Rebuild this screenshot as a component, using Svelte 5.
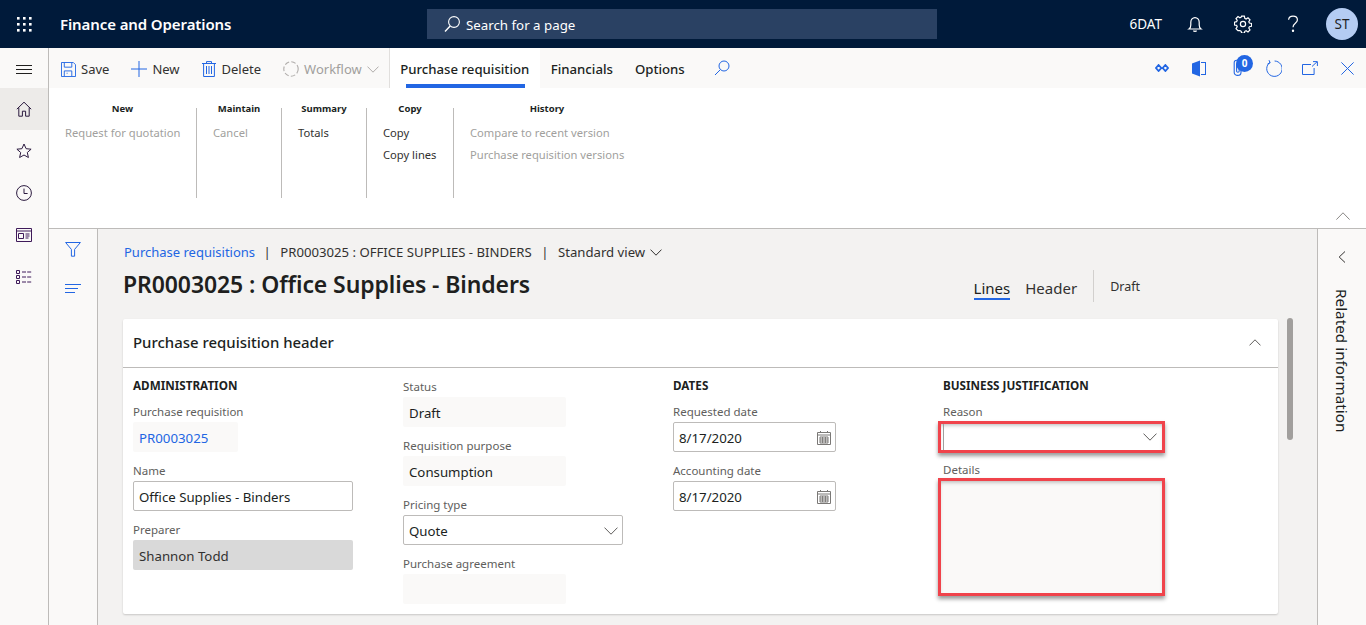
<script>
	const groups = [
		{ title: "New", width: 148, items: [{ label: "Request for quotation", off: true }] },
		{ title: "Maintain", width: 85, items: [{ label: "Cancel", off: true }] },
		{ title: "Summary", width: 85, items: [{ label: "Totals" }] },
		{ title: "Copy", width: 87, items: [{ label: "Copy" }, { label: "Copy lines" }] },
		{
			title: "History",
			width: 186,
			items: [
				{ label: "Compare to recent version", off: true },
				{ label: "Purchase requisition versions", off: true },
			],
		},
	];
</script>

<div class="shell">
	<header class="topbar">
		<svg class="waffle" width="16" height="16" viewBox="0 0 16 16" fill="#fff">
			{#each [1, 7, 13] as y}
				{#each [1, 7, 13] as x}
					<rect x={x} y={y} width="2.6" height="2.6" />
				{/each}
			{/each}
		</svg>
		<span class="brand">Finance and Operations</span>
		<div class="search">
			<svg width="18" height="18" viewBox="0 0 18 18" fill="none" stroke="#fff" stroke-width="1.1">
				<circle cx="11" cy="7" r="5.4" />
				<path d="M7.2 11 2 16.4" stroke-width="1.4" />
			</svg>
			<span>Search for a page</span>
		</div>
		<div class="top-right">
			<span class="company">6DAT</span>
			<svg class="bell" width="16" height="18" viewBox="0 0 16 18" fill="none" stroke="#fff" stroke-width="1.2">
				<path d="M2 14h12c-1.4-1-1.8-2.2-1.8-4V7.2C12.2 4.6 10.4 2.6 8 2.6S3.8 4.6 3.8 7.2V10c0 1.8-.4 3-1.8 4Z" />
				<path d="M6.4 15.6c.5.9 2.7.9 3.2 0" />
			</svg>
			<svg class="gear" width="18" height="18" viewBox="0 0 18 18" fill="none" stroke="#fff" stroke-width="1.2">
				<circle cx="9" cy="9" r="2.6" />
				<path d="M7.6 1.2h2.8l.4 2.2 1.3.6 1.9-1.2 2 2-1.2 1.9.6 1.3 2.1.5v2.8l-2.1.4-.6 1.3 1.2 1.9-2 2-1.9-1.2-1.3.6-.4 1.9H7.6l-.4-1.9-1.3-.6L4 15.6l-2-2 1.2-1.9-.6-1.3-2.1-.4V7.2l2.1-.5.6-1.3L2 3.5l2-2 1.9 1.2 1.3-.6Z" />
			</svg>
			<svg class="help" width="12" height="18" viewBox="0 0 12 18" fill="none" stroke="#fff" stroke-width="1.2">
				<path d="M1.6 4.8C1.8 2.6 3.6 1.2 6 1.2s4.4 1.5 4.4 3.7c0 3.3-4.4 3.4-4.4 7.3" />
				<circle cx="6" cy="15.8" r=".6" fill="#fff" />
			</svg>
			<span class="avatar">ST</span>
		</div>
	</header>

	<div class="workspace">
		<nav class="nav">
			<div class="nav-item burger">
				<svg width="16" height="9" viewBox="0 0 16 9" stroke="#201f1e" stroke-width="1"><path d="M0 .5h16M0 4.5h16M0 8.5h16" /></svg>
			</div>
			<div class="nav-item active">
				<svg width="16" height="16" viewBox="0 0 16 16" fill="none" stroke="#2b1a3f" stroke-width="1"><path d="M.8 8.2 8 1.2l7.2 7M2.8 6.6v8.6h3.6v-5h3.2v5h3.6V6.6" /></svg>
			</div>
			<div class="nav-item">
				<svg width="16" height="16" viewBox="0 0 16 16" fill="none" stroke="#2b1a3f" stroke-width="1"><path d="m8 1 2.1 4.7 5 .5-3.8 3.3 1.1 5L8 12l-4.4 2.5 1.1-5L.9 6.2l5-.5Z" /></svg>
			</div>
			<div class="nav-item">
				<svg width="16" height="16" viewBox="0 0 16 16" fill="none" stroke="#2b1a3f" stroke-width="1"><circle cx="8" cy="8" r="7.4" /><path d="M8 3.6V8.5h3.6" /></svg>
			</div>
			<div class="nav-item">
				<svg width="16" height="14" viewBox="0 0 16 14" fill="none" stroke="#3f1a5a" stroke-width="1"><path d="M.5 .5h15v13H.5zM.5 3h15M2.5 5.5h5v5h-5zM9.5 6h4M9.5 8h4M9.5 10h3" /></svg>
			</div>
			<div class="nav-item">
				<svg width="16" height="14" viewBox="0 0 16 14" fill="none" stroke="#3f1a5a" stroke-width="1"><path d="M.5 .5h3v3h-3zM.5 5.5h3v3h-3zM.5 10.5h3v3h-3z" /><path d="M6 2h9.5M6 7h9.5M6 12h9.5" stroke-dasharray="4 1.2" /></svg>
			</div>
		</nav>

		<div class="page">
			<div class="actions">
				<button class="act">
					<svg width="15" height="15" viewBox="0 0 16 16" fill="none" stroke="#2266e3" stroke-width="1"><path d="M.5 .5h12.6l2.4 2.4v12.6H.5z" /><path d="M3.5 .8v4.7h8V.8M3.5 15v-5.5h8V15M6 12h1" /></svg>
					Save
				</button>
				<button class="act plus">
					<svg width="16" height="16" viewBox="0 0 16 16" stroke="#2266e3" stroke-width="1"><path d="M8 0v16M0 8h16" /></svg>
					New
				</button>
				<button class="act del">
					<svg width="14" height="16" viewBox="0 0 14 16" fill="none" stroke="#2266e3" stroke-width="1"><path d="M0 2.5h14M4.5 2.5V.6h5v1.9M1.6 2.5v13h10.8v-13M4.5 5v8M7 5v8M9.5 5v8" /></svg>
					Delete
				</button>
				<button class="act flow">
					<svg width="16" height="16" viewBox="0 0 16 16" fill="none" stroke="#b0adab" stroke-width="1.1" stroke-dasharray="4.6 2.2"><circle cx="8" cy="8" r="7.2" /></svg>
					Workflow
					<svg class="chev" width="12" height="7" viewBox="0 0 12 7" fill="none" stroke="#b0adab" stroke-width="1"><path d="m.5 .6 5.5 5.6L11.5 .6" /></svg>
				</button>
				<div class="tabs">
					<div class="tab selected">Purchase requisition</div>
					<div class="tab">Financials</div>
					<div class="tab">Options</div>
				</div>
				<svg class="find" width="16" height="16" viewBox="0 0 16 16" fill="none" stroke="#2266e3" stroke-width="1"><circle cx="10" cy="6" r="5" /><path d="M6.4 9.6 1 15" /></svg>
				<div class="tools">
					<svg class="t-links" width="14" height="8" viewBox="0 0 14 8" fill="none" stroke="#2266e3" stroke-width="1.8"><path d="m3.6 1 2.7 3-2.7 3L1 4Zm6.8 0L13 4l-2.6 3-2.7-3Z" /></svg>
					<svg class="t-office" width="14" height="17" viewBox="0 0 14 17" fill="#2266e3"><path d="M0 3.4 8 .4v16.2l-8-3Z" /><path d="M9 2h5v13H9v-1h4V3H9Z" /></svg>
					<span class="clip">
						<svg width="10" height="18" viewBox="0 0 10 18" fill="none" stroke="#2266e3" stroke-width="1.1"><path d="M8 4v9.4c0 4-6.8 4-6.8 0V3.6c0-3.2 5-3.2 5 0V12c0 1.6-2.6 1.6-2.6 0V5" /></svg>
						<b class="badge">0</b>
					</span>
					<svg class="t-refresh" width="17" height="17" viewBox="0 0 17 17" fill="none" stroke="#2266e3" stroke-width="1"><path d="M5 2.4A7.7 7.7 0 1 0 9.6 1M4 .2l1.2 2.6-2.6 1.1" /></svg>
					<svg class="t-pop" width="16" height="14" viewBox="0 0 16 14" fill="none" stroke="#2266e3" stroke-width="1"><path d="M9 3.5H.5v10h11.6V7M10 5.5 15 .8M11 .6h4.4V5" /></svg>
					<svg class="t-close" width="13" height="13" viewBox="0 0 13 13" stroke="#2266e3" stroke-width="1"><path d="m.4 .4 12.2 12.2M12.6 .4.4 12.6" /></svg>
				</div>
			</div>

			<div class="ribbon">
				{#each groups as g}
					<section class="group" style="width: {g.width}px">
						<h4>{g.title}</h4>
						{#each g.items as item}
							<div class="cmd" class:off={item.off}>{item.label}</div>
						{/each}
					</section>
				{/each}
				<svg class="ribbon-up" width="14" height="8" viewBox="0 0 14 8" fill="none" stroke="#8a8886" stroke-width="1"><path d="M.4 7.6 7 .8l6.6 6.8" /></svg>
			</div>

			<div class="content">
				<aside class="rail">
					<svg width="16" height="15" viewBox="0 0 16 15" fill="none" stroke="#2266e3" stroke-width="1"><path d="M.6 .5h14.8L9.6 7.4v6.8H6.4V7.4Z" /></svg>
					<svg width="16" height="9" viewBox="0 0 16 9" stroke="#2266e3" stroke-width="1"><path d="M0 .5h16M0 4.5h13M0 8.5h10" /></svg>
				</aside>

				<main class="form">
					<div class="crumbs">
						<span class="link first">Purchase requisitions</span>
						<i>|</i>
						<span>PR0003025 : OFFICE SUPPLIES - BINDERS</span>
						<i>|</i>
						<span>Standard view</span>
						<svg width="12" height="7" viewBox="0 0 12 7" fill="none" stroke="#323130" stroke-width="1"><path d="m.5 .6 5.5 5.6L11.5 .6" /></svg>
					</div>
					<div class="heading">
						<h1>PR0003025 : Office Supplies - Binders</h1>
						<div class="views">
							<span class="view current">Lines</span>
							<span class="view">Header</span>
							<span class="state">Draft</span>
						</div>
					</div>

					<div class="card-row">
						<div class="card">
							<div class="card-head">
								<h2>Purchase requisition header</h2>
								<svg width="12" height="7" viewBox="0 0 12 7" fill="none" stroke="#605e5c" stroke-width="1"><path d="M.5 6.4 6 .8l5.5 5.6" /></svg>
							</div>
							<div class="columns">
								<div class="col">
									<h3>ADMINISTRATION</h3>
									<label>Purchase requisition</label>
									<div class="box ro w105 link">PR0003025</div>
									<label>Name</label>
									<div class="box input w220">Office Supplies - Binders</div>
									<label>Preparer</label>
									<div class="box locked w220">Shannon Todd</div>
								</div>
								<div class="col">
									<label>Status</label>
									<div class="box ro w163">Draft</div>
									<label>Requisition purpose</label>
									<div class="box ro w163">Consumption</div>
									<label>Pricing type</label>
									<div class="box input w220 select">
										Quote
										<svg width="14" height="8" viewBox="0 0 14 8" fill="none" stroke="#605e5c" stroke-width="1"><path d="m.5 .6 6.5 6.6L13.5 .6" /></svg>
									</div>
									<label>Purchase agreement</label>
									<div class="box ro w163"></div>
								</div>
								<div class="col">
									<h3>DATES</h3>
									<label>Requested date</label>
									<div class="box input w163 select">
										8/17/2020
										<svg width="14" height="14" viewBox="0 0 14 14" fill="none" stroke="#7a7876" stroke-width="1"><path d="M.5 1.5h13v12H.5zM.5 4h13M3 6h8v6H3zM5.6 6v6M8.4 6v6M3 8h8M3 10h8M3.5 0v2M10.5 0v2" /></svg>
									</div>
									<label>Accounting date</label>
									<div class="box input w163 select">
										8/17/2020
										<svg width="14" height="14" viewBox="0 0 14 14" fill="none" stroke="#7a7876" stroke-width="1"><path d="M.5 1.5h13v12H.5zM.5 4h13M3 6h8v6H3zM5.6 6v6M8.4 6v6M3 8h8M3 10h8M3.5 0v2M10.5 0v2" /></svg>
									</div>
								</div>
								<div class="col">
									<h3>BUSINESS JUSTIFICATION</h3>
									<label>Reason</label>
									<div class="box marked reason select">
										<svg width="14" height="8" viewBox="0 0 14 8" fill="none" stroke="#605e5c" stroke-width="1"><path d="m.5 .6 6.5 6.6L13.5 .6" /></svg>
									</div>
									<label class="details-label">Details</label>
									<div class="box marked details"></div>
								</div>
							</div>
						</div>
						<div class="thumb"></div>
					</div>
				</main>

				<aside class="related">
					<svg width="8" height="12" viewBox="0 0 8 12" fill="none" stroke="#323130" stroke-width="1"><path d="M7 .5 1.2 6 7 11.5" /></svg>
					<span>Related information</span>
				</aside>
			</div>
		</div>
	</div>
</div>

<style>
	:global(body) {
		margin: 0;
		overflow: hidden;
	}

	.shell {
		width: 1366px;
		height: 625px;
		overflow: hidden;
		display: flex;
		flex-direction: column;
		font-family: "Noto Sans", "Open Sans", sans-serif;
		font-size: 12.5px;
		color: #201f1e;
		background: #fff;
	}

	svg {
		display: block;
		flex: none;
	}

	.topbar {
		height: 48px;
		flex: none;
		display: flex;
		align-items: center;
		background: #001a3a;
		color: #fff;
	}

	.waffle {
		margin-left: 16px;
	}

	.brand {
		margin-left: 28px;
		width: 367px;
		font-size: 15px;
		font-weight: 600;
		letter-spacing: -0.1px;
	}

	.search {
		width: 510px;
		height: 30px;
		display: flex;
		align-items: center;
		gap: 5px;
		padding-left: 16px;
		box-sizing: border-box;
		background: #2a4163;
		font-size: 13.3px;
	}

	.search span {
		padding-top: 2px;
	}

	.top-right {
		margin-left: auto;
		display: flex;
		align-items: center;
		padding-right: 8px;
	}

	.company {
		font-size: 13.5px;
		margin-right: 25px;
	}

	.bell {
		margin-right: 31px;
	}

	.gear {
		margin-right: 35px;
	}

	.help {
		margin-right: 27px;
	}

	.avatar {
		width: 32px;
		height: 32px;
		border-radius: 50%;
		background: #b4ccf2;
		color: #201f1e;
		display: flex;
		align-items: center;
		justify-content: center;
		font-size: 13.5px;
	}

	.workspace {
		flex: 1;
		display: flex;
		min-height: 0;
	}

	.nav {
		width: 48px;
		flex: none;
		background: #faf9f8;
		border-right: 1px solid #bdbbb9;
		display: flex;
		flex-direction: column;
	}

	.nav-item {
		height: 42px;
		display: flex;
		align-items: center;
		justify-content: center;
	}

	.nav-item.burger {
		height: 40px;
		padding-top: 2px;
		box-sizing: border-box;
	}

	.nav-item.active {
		background: #edebe9;
	}

	.page {
		flex: 1;
		min-width: 0;
		display: flex;
		flex-direction: column;
	}

	.actions {
		height: 40px;
		flex: none;
		display: flex;
		align-items: center;
		background: #faf9f8;
	}

	.act {
		display: flex;
		align-items: center;
		gap: 5px;
		border: none;
		background: none;
		padding: 2px 0 0;
		margin-left: 12px;
		font: inherit;
		font-size: 13px;
		color: #323130;
	}

	.act.plus {
		margin-left: 22px;
	}

	.act.del {
		margin-left: 22px;
		gap: 6px;
	}

	.act.flow {
		margin-left: 22px;
		color: #a19f9d;
	}

	.tabs {
		display: flex;
		height: 40px;
		margin-left: 10px;
		border-left: 1px solid #e1dfdd;
		font-size: 13.2px;
		font-weight: 500;
		white-space: nowrap;
	}

	.tab {
		display: flex;
		align-items: center;
		padding: 2px 11px 0;
	}

	.tab.selected {
		width: 150px;
		padding: 2px 0 0;
		box-sizing: border-box;
		justify-content: center;
		background: #fff;
		position: relative;
	}

	.tab.selected::after {
		content: "";
		position: absolute;
		left: 16px;
		right: 15px;
		bottom: 0;
		height: 4px;
		background: #2266e3;
	}

	.find {
		margin-left: 18px;
	}

	.tools {
		margin-left: auto;
		display: flex;
		align-items: center;
		padding-right: 12px;
	}

	.t-office {
		margin-left: 23px;
	}

	.t-refresh {
		margin-left: 22px;
	}

	.t-pop {
		margin-left: 20px;
	}

	.t-close {
		margin-left: 23px;
	}

	.clip {
		position: relative;
		display: block;
		margin-left: 27px;
	}

	.badge {
		position: absolute;
		left: 3px;
		top: -4px;
		width: 17px;
		height: 17px;
		border-radius: 50%;
		background: #2266e3;
		color: #fff;
		font-size: 10px;
		line-height: 17px;
		text-align: center;
	}

	.ribbon {
		height: 141px;
		flex: none;
		display: flex;
		position: relative;
		box-sizing: border-box;
		padding-top: 20px;
		border-bottom: 1px solid #bdbbb9;
	}

	.group {
		height: 90px;
		box-sizing: border-box;
		padding-left: 16px;
		border-right: 1px solid #bdbbb9;
		font-size: 11.2px;
	}

	.group:last-of-type {
		border-right: none;
	}

	.group h4 {
		margin: -6px 0 7px -16px;
		text-align: center;
		font-size: 9.5px;
		line-height: 13px;
		font-weight: 700;
	}

	.cmd {
		height: 22px;
		line-height: 22px;
		white-space: nowrap;
		color: #323130;
	}

	.cmd.off {
		color: #a19f9d;
	}

	.ribbon-up {
		position: absolute;
		right: 16px;
		bottom: 8px;
	}

	.content {
		flex: 1;
		min-height: 0;
		display: flex;
	}

	.rail {
		width: 48px;
		flex: none;
		background: #faf9f8;
		border-right: 1px solid #bdbbb9;
		display: flex;
		flex-direction: column;
		align-items: center;
		padding-top: 13px;
		gap: 27px;
	}

	.form {
		flex: 1;
		min-width: 0;
		background: #f3f2f1;
		padding-left: 26px;
	}

	.crumbs {
		display: flex;
		align-items: center;
		height: 20px;
		margin-top: 13px;
		font-size: 13.15px;
		color: #323130;
		white-space: nowrap;
	}

	.crumbs i {
		font-style: normal;
		margin: 0 9.5px;
	}

	.crumbs svg {
		margin-left: 5px;
	}

	.crumbs .first {
		font-size: 13px;
		margin-right: -1px;
	}

	.link {
		color: #2266e3;
	}

	.heading {
		display: flex;
		align-items: flex-start;
		justify-content: space-between;
		height: 57px;
		padding-right: 177px;
	}

	h1 {
		margin: 0 0 0 -1px;
		font-size: 23px;
		line-height: 44px;
		font-weight: 600;
		color: #201f1e;
		letter-spacing: -0.1px;
	}

	.views {
		display: flex;
		align-items: flex-start;
		margin-top: 8px;
		height: 32px;
		font-size: 15px;
		color: #323130;
	}

	.view {
		box-sizing: border-box;
		padding-top: 8px;
		line-height: 20px;
		margin-right: 15px;
		height: 30px;
		border-bottom: 2px solid transparent;
	}

	.view.current {
		color: #201f1e;
		border-bottom-color: #2266e3;
	}

	.state {
		margin-left: 1px;
		padding-left: 16px;
		height: 32px;
		line-height: 34px;
		font-size: 12.5px;
		border-left: 1px solid #d2d0ce;
	}

	.card-row {
		display: flex;
		gap: 9px;
		margin-left: -1px;
	}

	.card {
		width: 1155px;
		flex: none;
		height: 295px;
		box-sizing: border-box;
		background: #fff;
		border-radius: 2px;
		box-shadow: 0 1px 2px rgba(0, 0, 0, 0.18);
	}

	.card-head {
		height: 49px;
		box-sizing: border-box;
		display: flex;
		align-items: center;
		justify-content: space-between;
		padding: 0 17px 2px 10px;
		border-bottom: 1px solid #bdbbb9;
	}

	h2 {
		margin: 0;
		font-size: 14.95px;
		font-weight: 500;
		color: #201f1e;
	}

	.columns {
		display: grid;
		grid-template-columns: repeat(4, 270px);
		padding: 9px 0 0 10px;
	}

	h3 {
		margin: 0;
		height: 25px;
		font-size: 11.7px;
		line-height: 16px;
		font-weight: 700;
		color: #201f1e;
	}

	label {
		display: block;
		height: 20px;
		font-size: 11.5px;
		line-height: 20px;
		color: #605e5c;
	}

	.box {
		height: 30px;
		margin-bottom: 9px;
		box-sizing: border-box;
		padding: 2px 6px 0;
		display: flex;
		align-items: center;
		font-size: 13.25px;
		border-radius: 2px;
	}

	.w105 {
		width: 105px;
	}

	.w163 {
		width: 163px;
	}

	.w220 {
		width: 220px;
	}

	.ro {
		background: #faf9f8;
	}

	.input {
		background: #fff;
		border: 1px solid #bdbbb9;
		padding-left: 5px;
	}

	.locked {
		background: #d9d9d9;
		color: #323130;
	}

	.select {
		justify-content: space-between;
		padding-right: 4px;
	}

	.marked {
		border-radius: 0;
		border: 3px solid #f0434b;
		padding-top: 0;
		box-shadow: 0 3px 4px rgba(0, 0, 0, 0.4), inset 0 3px 4px -2px rgba(0, 0, 0, 0.3);
		margin-left: -5px;
	}

	.reason {
		position: relative;
		width: 227px;
		height: 32px;
		margin-top: -1px;
		margin-bottom: 8px;
		justify-content: flex-end;
		padding-right: 5px;
	}

	.reason::before {
		content: "";
		position: absolute;
		left: 2px;
		top: 0;
		bottom: 0;
		width: 1px;
		background: #a19f9d;
	}

	.details-label {
		height: 17px;
		line-height: 17px;
	}

	.details {
		width: 227px;
		height: 118px;
		background: #faf9f8;
	}

	.thumb {
		width: 6px;
		height: 122px;
		margin-top: -1px;
		border-radius: 3px;
		background: #a19f9d;
	}

	.related {
		width: 48px;
		flex: none;
		background: #faf9f8;
		border-left: 1px solid #bdbbb9;
		display: flex;
		flex-direction: column;
		align-items: center;
		padding-top: 22px;
		gap: 26px;
	}

	.related span {
		writing-mode: vertical-rl;
		font-size: 15.3px;
		color: #201f1e;
		white-space: nowrap;
	}
</style>
